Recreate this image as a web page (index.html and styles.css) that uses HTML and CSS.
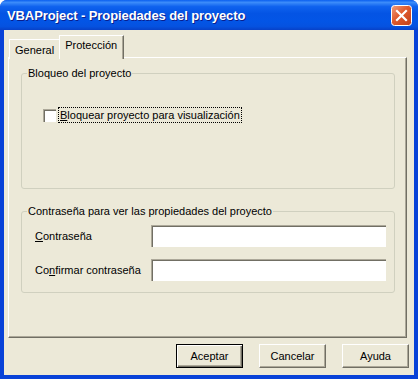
FILE: index.html
```html
<!DOCTYPE html>
<html lang="es">
<head>
<meta charset="utf-8">
<title>VBAProject - Propiedades del proyecto</title>
<link rel="stylesheet" href="styles.css">
</head>
<body>
<div class="window">
  <div class="titlebar">
    <span class="title">VBAProject - Propiedades del proyecto</span>
    <div class="close">
      <svg width="21" height="21" viewBox="0 0 21 21">
        <defs>
          <linearGradient id="cg" x1="0" y1="0" x2="1" y2="1">
            <stop offset="0" stop-color="#F0A080"/>
            <stop offset="0.45" stop-color="#E05A2C"/>
            <stop offset="1" stop-color="#C0401A"/>
          </linearGradient>
        </defs>
        <rect x="0.5" y="0.5" width="20" height="20" rx="3" fill="url(#cg)" stroke="#FFFFFF"/>
        <path d="M6 6 L15 15 M15 6 L6 15" stroke="#FFFFFF" stroke-width="2.2" stroke-linecap="square"/>
      </svg>
    </div>
  </div>
  <div class="body">
    <div class="tabs">
      <div class="tab">General</div>
      <div class="tab active">Protección</div>
    </div>
    <div class="panel">
      <div class="group g1">
        <div class="legend">Bloqueo del proyecto</div>
        <div class="check">
          <span class="box"></span>
          <span class="focus"><u>B</u>loquear proyecto para visualización</span>
        </div>
      </div>
      <div class="group g2">
        <div class="legend">Contraseña para ver las propiedades del proyecto</div>
        <div class="row">
          <span class="lbl"><u>C</u>ontraseña</span>
          <span class="input"></span>
        </div>
        <div class="row">
          <span class="lbl">Co<u>n</u>firmar contraseña</span>
          <span class="input"></span>
        </div>
      </div>
    </div>
    <div class="buttons">
      <div class="btn default"><span>Aceptar</span></div>
      <div class="btn"><span>Cancelar</span></div>
      <div class="btn"><span>Ayuda</span></div>
    </div>
  </div>
</div>
</body>
</html>
```
FILE: styles.css
```css
* { box-sizing: border-box; }
html, body { margin: 0; padding: 0; }
body {
  width: 418px;
  height: 379px;
  overflow: hidden;
  font-family: "Liberation Sans", Arial, sans-serif;
  font-size: 11px;
  color: #000;
}
.window {
  width: 418px;
  height: 379px;
  display: flex;
  flex-direction: column;
  background: #0842D8;
  border-radius: 7px 7px 0 0;
  overflow: hidden;
}
.titlebar {
  height: 30px;
  flex: none;
  display: flex;
  align-items: center;
  justify-content: space-between;
  padding: 0 6px 0 7px;
  background: linear-gradient(to bottom, #0A5FEF 0%, #3C8CFA 8%, #0F62EE 22%, #0454E4 45%, #0355E6 70%, #0552E0 88%, #0741C8 100%);
}
.title {
  color: #fff;
  font-family: "Liberation Sans", Arial, sans-serif;
  font-weight: bold;
  font-size: 13px;
  letter-spacing: -0.1px;
  text-shadow: 1px 1px 0 #0A1E8C;
}
.close { width: 21px; height: 21px; display: flex; }
.body {
  flex: 1;
  margin: 0 4px 4px 4px;
  background: #ECE9D8;
  padding: 5px 7px 0 4px;
  display: flex;
  flex-direction: column;
}
.tabs {
  display: flex;
  align-items: flex-end;
  height: 24px;
  padding-left: 1px;
  position: relative;
  z-index: 1;
}
.tab {
  height: 20px;
  padding: 3px 5px 0 5px;
  border-top: 1px solid #fff;
  border-left: 1px solid #fff;
  border-right: 1px solid #716F64;
  background: #ECE9D8;
  line-height: 14px;
  white-space: nowrap;
}
.tab.active {
  height: 24px;
  padding: 2px 6px 0 5px;
  margin-left: -1px;
  box-shadow: inset -1px 0 0 #ACA899;
}
.panel {
  height: 281px;
  margin-top: -2px;
  border-top: 1px solid #fff;
  border-left: 1px solid #fff;
  border-right: 1px solid #716F64;
  border-bottom: 1px solid #716F64;
  box-shadow: inset -1px -1px 0 #ACA899;
  padding: 8px 11px 0 12px;
  display: flex;
  flex-direction: column;
  gap: 15px;
}
.group {
  position: relative;
  border: 1px solid #D0D0BF;
  border-radius: 3px;
  margin-top: 7px;
}
.legend {
  position: absolute;
  top: -8px;
  left: 5px;
  padding: 0 1px;
  background: #ECE9D8;
  line-height: 14px;
  white-space: nowrap;
}
.g1 { height: 116px; padding: 34px 0 0 21px; }
.g2 { height: 82px; padding: 13px 8px 0 13px; display: flex; flex-direction: column; gap: 12px; }
.check { display: flex; align-items: center; gap: 3px; }
.box {
  width: 13px; height: 13px;
  background: #fff;
  border-top: 1px solid #ACA899;
  border-left: 1px solid #ACA899;
  box-shadow: inset 1px 1px 0 #716F64;
}
.focus {
  outline: 1px dotted #000;
  padding: 0 1px;
  line-height: 14px;
}
.row { display: flex; align-items: center; justify-content: space-between; }
.lbl { white-space: nowrap; }
.input {
  width: 235px; height: 22px;
  background: #fff;
  border-top: 1px solid #ACA899;
  border-left: 1px solid #ACA899;
  box-shadow: inset 1px 1px 0 #716F64;
}
.buttons {
  display: flex;
  justify-content: flex-end;
  gap: 16px;
  padding: 6px 0 0 0;
  margin-right: -2px;
}
.btn {
  width: 67px; height: 24px;
  display: flex; align-items: center; justify-content: center;
  border-top: 1px solid #fff;
  border-left: 1px solid #fff;
  border-right: 1px solid #716F64;
  border-bottom: 1px solid #716F64;
  box-shadow: inset -1px -1px 0 #ACA899;
}
.btn.default { border: 1px solid #000; box-shadow: inset 1px 1px 0 #fff, inset -1px -1px 0 #716F64, inset -2px -2px 0 #ACA899; }
```
